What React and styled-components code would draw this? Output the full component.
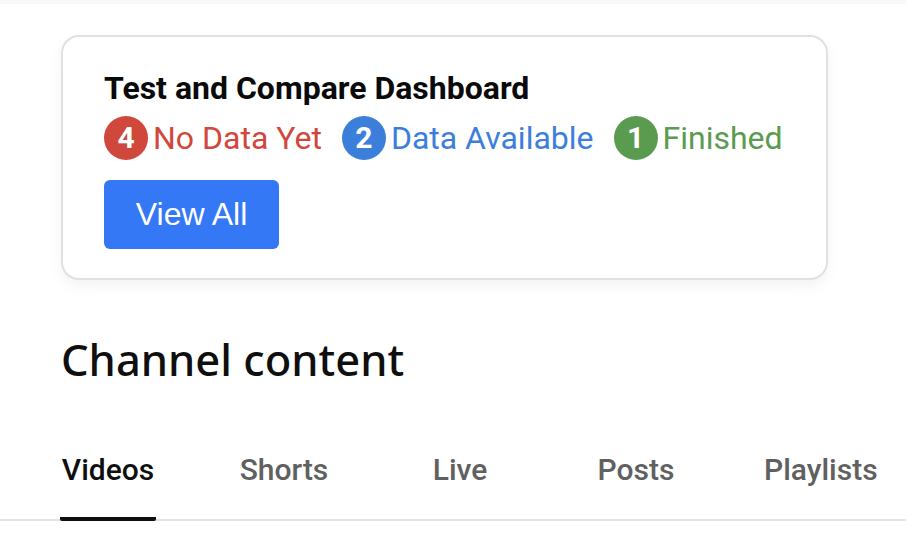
import React from 'react';
import styled, { createGlobalStyle } from 'styled-components';

const GlobalStyle = createGlobalStyle`
    html, body {
        margin: 0;
        padding: 0;
        background: #ffffff;
    }
    body {
        font-family: Roboto, "Liberation Sans", Arial, sans-serif;
        color: #0f0f0f;
    }
`;

const statuses = [
    { count: 4, label: 'No Data Yet', color: '#d0473b' },
    { count: 2, label: 'Data Available', color: '#3c7fdb' },
    { count: 1, label: 'Finished', color: '#5a9b50' },
];

const tabs = ['Videos', 'Shorts', 'Live', 'Posts', 'Playlists'];

const App = () => {
    return (<Page>
        <GlobalStyle />
        <TopStrip />

        <Content>
            <Card>
                <CardTitle>Test and Compare Dashboard</CardTitle>
                <StatusRow>
                    {statuses.map((s) => (
                        <Status key={s.label} $color={s.color}>
                            <Badge $color={s.color}>{s.count}</Badge>
                            {s.label}
                        </Status>
                    ))}
                </StatusRow>
                <ViewAllButton>View All</ViewAllButton>
            </Card>

            <Heading>Channel content</Heading>
        </Content>

        <TabBar>
            {tabs.map((t, i) => (
                <Tab key={t} $last={i === tabs.length - 1}>
                    <TabLabel $active={i === 0}>{t}</TabLabel>
                </Tab>
            ))}
        </TabBar>
    </Page>);
}

const Page = styled.div`
    width: 906px;
    min-height: 542px;
    overflow: hidden;
`;

const TopStrip = styled.div`
    height: 4px;
    background: #f8f8f8;
`;

const Content = styled.div`
    padding: 31px 78px 0 61px;
`;

const Card = styled.div`
    border: 2px solid #e1e1e1;
    border-radius: 18px;
    padding: 33px 20px 29px 41px;
    box-shadow: 0 6px 14px rgba(0, 0, 0, 0.05);
    background: #fff;
`;

const CardTitle = styled.div`
    font-family: Roboto, sans-serif;
    font-weight: 700;
    font-size: 32px;
    line-height: 36px;
    color: #0a0a0a;
`;

const StatusRow = styled.div`
    display: flex;
    align-items: center;
    gap: 20px;
    margin-top: 10px;
    white-space: nowrap;
`;

const Status = styled.div`
    display: flex;
    align-items: center;
    flex-shrink: 0;
    gap: 5px;
    font-family: Roboto, sans-serif;
    font-size: 32px;
    line-height: 44px;
    color: ${(p) => p.$color};
`;

const Badge = styled.span`
    flex-shrink: 0;
    width: 44px;
    height: 44px;
    border-radius: 50%;
    background: ${(p) => p.$color};
    color: #fff;
    font-weight: 700;
    font-size: 30px;
    display: flex;
    align-items: center;
    justify-content: center;
`;

const ViewAllButton = styled.button`
    display: block;
    margin-top: 20px;
    width: 175px;
    height: 69px;
    border: none;
    border-radius: 6px;
    background: #3478f6;
    color: #fff;
    font-family: "Liberation Sans", Arial, sans-serif;
    font-size: 32px;
    padding: 0;
`;

const Heading = styled.h2`
    margin: 54px 0 0;
    font-family: "Noto Sans", sans-serif;
    font-weight: 500;
    font-size: 43.5px;
    line-height: 50px;
    color: #0f0f0f;
`;

const TabBar = styled.div`
    display: flex;
    margin-top: 68px;
    padding-left: 20px;
    border-bottom: 2px solid #e3e3e3;
`;

const Tab = styled.div`
    width: ${(p) => (p.$last ? 'auto' : '176px')};
    padding-left: ${(p) => (p.$last ? '38px' : '0')};
    display: flex;
    justify-content: ${(p) => (p.$last ? 'flex-start' : 'center')};
`;

const TabLabel = styled.div`
    padding: 0 2px 29px;
    font-family: Roboto, sans-serif;
    font-weight: 500;
    font-size: 30px;
    line-height: 36px;
    color: ${(p) => (p.$active ? '#0f0f0f' : '#606060')};
    border-bottom: 4px solid ${(p) => (p.$active ? '#0f0f0f' : 'transparent')};
    border-radius: 0 0 2px 2px;
    margin-bottom: -2px;
`;

export default App;
